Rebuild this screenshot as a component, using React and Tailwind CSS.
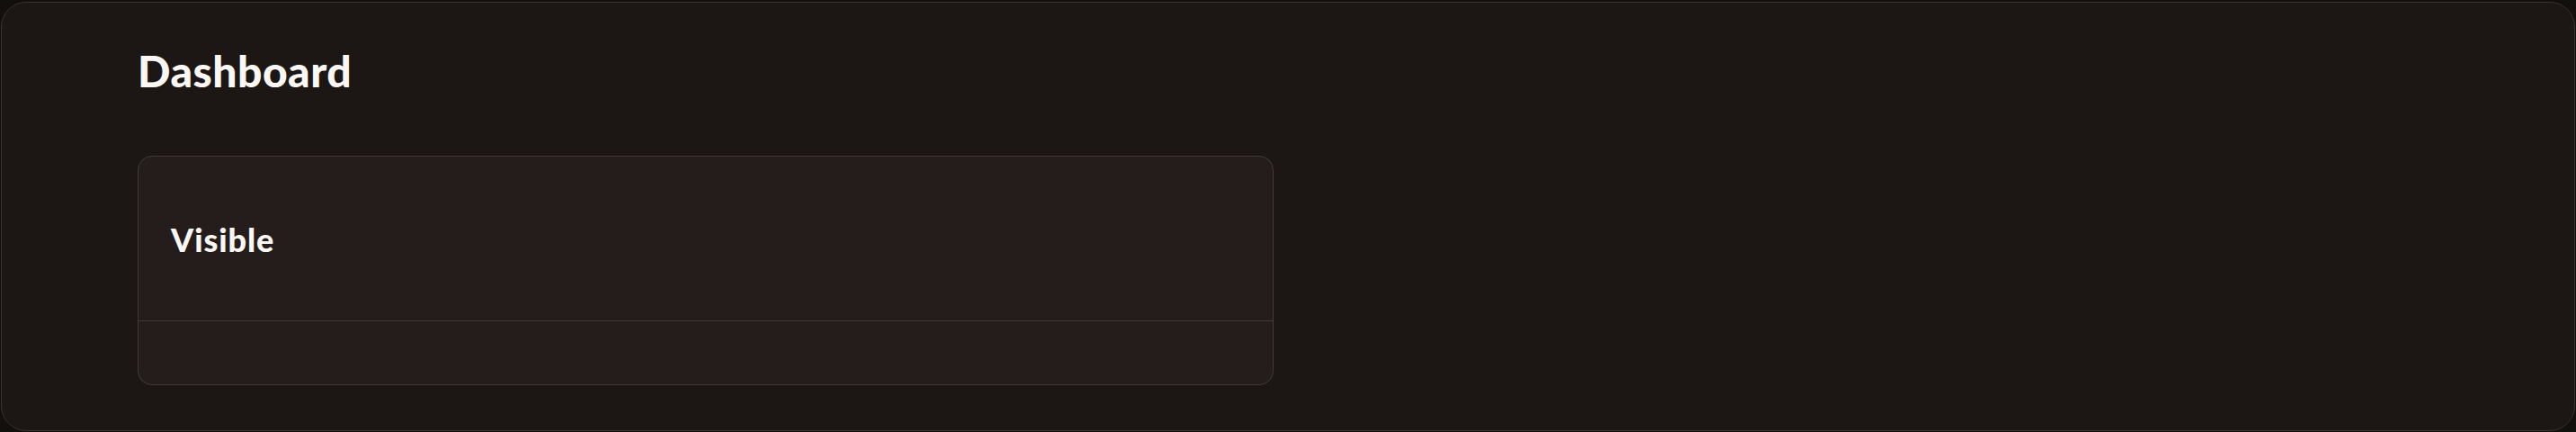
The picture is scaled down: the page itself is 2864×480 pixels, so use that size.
export default function App() {
  return (
    <div className="min-h-[480px] bg-[#130f0d] pt-[2px] px-px pb-px" style={{ fontFamily: 'Lato, "Noto Sans", sans-serif' }}>
      <div className="h-[477px] rounded-[28px] border border-[#3a322d] bg-[#1c1714] pl-[151px] pt-[52px]">
        <h1 className="text-[48px] leading-[48px] font-black tracking-[0.5px] text-[#faf7f5]">Dashboard</h1>

        <div className="mt-[70px] w-[1263px] rounded-2xl border border-[#433a35] bg-[#251d1b] overflow-hidden">
          <div className="h-[183px] flex items-center px-9 pt-[2px] border-b border-[#433a35]">
            <h2 className="text-[36px] leading-none font-black tracking-[0.9px] text-[#faf7f5]">Visible</h2>
          </div>
          <div className="h-[70px]" />
        </div>
      </div>
    </div>
  )
}
